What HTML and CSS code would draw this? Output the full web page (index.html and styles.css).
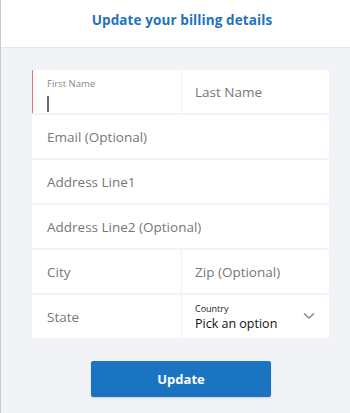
FILE: index.html
```html
<!DOCTYPE html>
<html>
<head>
<meta charset="utf-8">
<link rel="stylesheet" href="styles.css">
</head>
<body>
<div class="page">
  <header class="header">
    <h1 class="title">Update your billing details</h1>
  </header>
  <main class="content">
    <form class="card">
      <div class="row">
        <div class="cell cell-active">
          <span class="label">First Name</span>
          <span class="caret"></span>
        </div>
        <div class="cell cell-right"><span class="ph">Last Name</span></div>
      </div>
      <div class="row single"><div class="cell"><span class="ph">Email (Optional)</span></div></div>
      <div class="row single"><div class="cell"><span class="ph">Address Line1</span></div></div>
      <div class="row single"><div class="cell"><span class="ph">Address Line2 (Optional)</span></div></div>
      <div class="row">
        <div class="cell"><span class="ph">City</span></div>
        <div class="cell cell-right"><span class="ph">Zip (Optional)</span></div>
      </div>
      <div class="row">
        <div class="cell"><span class="ph">State</span></div>
        <div class="cell cell-right cell-select">
          <div class="select-text">
            <span class="select-label">Country</span>
            <span class="select-value">Pick an option</span>
          </div>
          <svg class="chevron" width="12" height="8" viewBox="0 0 12 8"><path d="M1 1.5 L6 6 L11 1.5" fill="none" stroke="#8a8a8a" stroke-width="1.6"/></svg>
        </div>
      </div>
    </form>
    <div class="actions">
      <button type="button" class="btn">Update</button>
    </div>
  </main>
</div>
</body>
</html>
```
FILE: styles.css
```css
* { box-sizing: border-box; }
html, body { margin: 0; padding: 0; }
body {
  width: 350px;
  height: 413px;
  background: #f2f3f7;
  font-family: "Open Sans", "Noto Sans", sans-serif;
  overflow: hidden;
}
.page {
  border-left: 1px solid #c9c9cc;
  min-height: 413px;
}
.header {
  background: #ffffff;
  height: 48px;
  border-bottom: 1px solid #e3e4e8;
  display: flex;
  align-items: center;
  justify-content: center;
  padding-left: 13px;
  padding-bottom: 8px;
}
.title {
  margin: 0;
  font-size: 13.5px;
  font-weight: 700;
  color: #1f72c0;
  letter-spacing: 0.1px;
}
.content {
  padding: 22px 20px 0 31px;
}
.card {
  display: flex;
  flex-direction: column;
  gap: 2px;
  width: 297px;
  margin: 0;
}
.row {
  display: grid;
  grid-template-columns: 149px 1fr;
  height: 43px;
  background: #ffffff;
}
.row.single {
  grid-template-columns: 1fr;
}
.cell {
  display: flex;
  align-items: center;
  padding-left: 15px;
  background: #ffffff;
  min-width: 0;
}
.cell-right {
  border-left: 1px solid #eff0f3;
  padding-left: 13px;
}
.ph {
  font-size: 13.5px;
  color: #777777;
  white-space: nowrap;
}
.cell-active {
  border-left: 1px solid #e8707a;
  padding-left: 14px;
  flex-direction: column;
  align-items: flex-start;
  justify-content: flex-start;
  padding-top: 8px;
}
.label {
  font-size: 9.5px;
  color: #8a8a8a;
  line-height: 12px;
}
.caret {
  display: block;
  width: 2px;
  height: 16px;
  background: #6a6a6a;
  margin-top: 6px;
}
.cell-select {
  justify-content: space-between;
  padding-right: 13px;
}
.select-text {
  display: flex;
  flex-direction: column;
  padding-top: 2px;
}
.select-label {
  font-size: 9px;
  color: #222222;
  line-height: 12px;
}
.select-value {
  font-size: 12.5px;
  color: #111111;
  line-height: 16px;
  margin-top: 1px;
}
.chevron { display: block; margin-top: -2px; margin-right: 1px; }
.actions {
  display: flex;
  justify-content: center;
  padding-top: 23px;
}
.btn {
  width: 180px;
  height: 36px;
  border: none;
  border-radius: 2px;
  background: #1b74c1;
  color: #ffffff;
  font-family: "Open Sans", "Noto Sans", sans-serif;
  font-weight: 700;
  font-size: 13px;
  box-shadow: 0 1px 2px rgba(0,0,0,0.15);
}
```
